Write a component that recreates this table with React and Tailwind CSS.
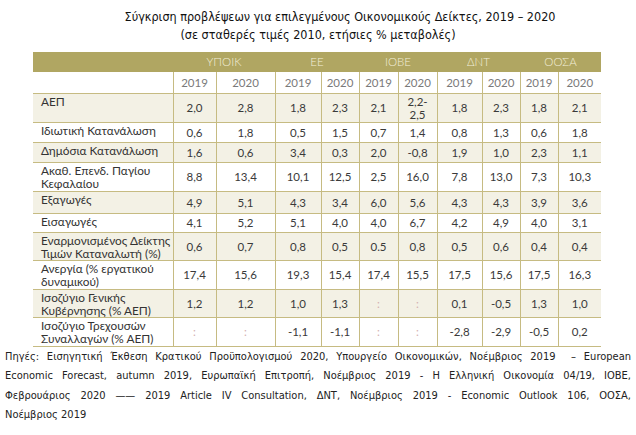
import React from "react";

const groups = ["ΥΠΟΙΚ", "ΕΕ", "ΙΟΒΕ", "ΔΝΤ", "ΟΟΣΑ"];

const colWidths = [140, 43, 59, 46, 38, 39, 39, 45, 38, 38, 43];

const rows = [
  { label: "ΑΕΠ", h: 29, values: ["2,0", "2,8", "1,8", "2,3", "2,1", "2,2-|2,5", "1,8", "2,3", "1,8", "2,1"] },
  { label: "Ιδιωτική Κατανάλωση", h: 20, values: ["0,6", "1,8", "0,5", "1,5", "0,7", "1,4", "0,8", "1,3", "0,6", "1,8"] },
  { label: "Δημόσια Κατανάλωση", h: 20, values: ["1,6", "0,6", "3,4", "0,3", "2,0", "-0,8", "1,9", "1,0", "2,3", "1,1"] },
  { label: "Ακαθ. Επενδ. Παγίου Κεφαλαίου", h: 29, values: ["8,8", "13,4", "10,1", "12,5", "2,5", "16,0", "7,8", "13,0", "7,3", "10,3"] },
  { label: "Εξαγωγές", h: 22, values: ["4,9", "5,1", "4,3", "3,4", "6,0", "5,6", "4,3", "4,3", "3,9", "3,6"] },
  { label: "Εισαγωγές", h: 19, values: ["4,1", "5,2", "5,1", "4,0", "4,0", "6,7", "4,2", "4,9", "4,0", "3,1"] },
  { label: "Εναρμονισμένος Δείκτης Τιμών Καταναλωτή (%)", h: 28, values: ["0,6", "0,7", "0,8", "0,5", "0.5", "0,8", "0,5", "0,6", "0,4", "0,4"] },
  { label: "Ανεργία (% εργατικού δυναμικού)", h: 29, values: ["17,4", "15,6", "19,3", "15,4", "17,4", "15,5", "17,5", "15,6", "17,5", "16,3"] },
  { label: "Ισοζύγιο Γενικής Κυβέρνησης (% ΑΕΠ)", h: 28, values: ["1,2", "1,2", "1,0", "1,3", ":", ":", "0,1", "-0,5", "1,3", "1,0"] },
  { label: "Ισοζύγιο Τρεχουσών Συναλλαγών (% ΑΕΠ)", h: 29, values: [":", ":", "-1,1", "-1,1", ":", ":", "-2,8", "-2,9", "-0,5", "0,2"] },
];

const footerLines = [
  "Πηγές: Εισηγητική Έκθεση Κρατικού Προϋπολογισμού 2020, Υπουργείο Οικονομικών, Νοέμβριος 2019 \u00a0– European",
  "Economic Forecast, autumn 2019, Ευρωπαϊκή Επιτροπή, Νοέμβριος 2019 - Η Ελληνική Οικονομία 04/19, ΙΟΒΕ,",
  "Φεβρουάριος 2020 —— 2019 Article IV Consultation, ΔΝΤ, Νοέμβριος 2019 - Economic Outlook 106, ΟΟΣΑ,",
];

function Cell({ value, last }) {
  const dim = value === ":";
  const parts = value.split("|");
  return (
    <td
      className={`border-b border-[#c6bb82] p-0 text-center align-middle leading-[13px] ${last ? "" : "border-r"} ${dim ? "text-[#d2afaf]" : "text-[#3a3a3a]"}`}
    >
      {parts.map((p, i) => (
        <React.Fragment key={i}>
          {i > 0 && <br />}
          {p}
        </React.Fragment>
      ))}
    </td>
  );
}

export default function App() {
  return (
    <div className="w-[636px] h-[435px] overflow-hidden bg-white">
      <div className="pt-[8px] text-[12.5px] leading-[18px] text-[#111] font-['DejaVu_Sans_Condensed','DejaVu_Sans',sans-serif]">
        <div className="text-center pl-[44px]">
          Σύγκριση προβλέψεων για επιλεγμένους Οικονομικούς Δείκτες, 2019 – 2020
        </div>
        <div className="text-center">(σε σταθερές τιμές 2010, ετήσιες % μεταβολές)</div>
      </div>

      <table className="ml-[33px] mt-[8px] table-fixed border-collapse w-[568px] text-[11.5px] font-['Lato',sans-serif]">
        <colgroup>
          {colWidths.map((w, i) => (
            <col key={i} style={{ width: w }} />
          ))}
        </colgroup>
        <tbody>
          <tr className="h-[20px] bg-[#b0a662] text-[#f3efd9]">
            <td />
            {groups.map((g) => (
              <td key={g} colSpan={2} className="text-center font-light">
                {g}
              </td>
            ))}
          </tr>
          <tr className="h-[21px] bg-white text-[#7a7a7a]">
            <td className="border-b border-r border-[#c6bb82]" />
            {groups.flatMap((g, gi) =>
              ["2019", "2020"].map((y, yi) => (
                <td
                  key={g + y}
                  className={`border-b border-[#c6bb82] text-center ${gi === 4 && yi === 1 ? "" : "border-r"}`}
                >
                  {y}
                </td>
              ))
            )}
          </tr>
          {rows.map((r, ri) => (
            <tr
              key={r.label}
              className={ri % 2 === 0 ? "bg-[#f3f1e5]" : "bg-white"}
              style={{ height: r.h }}
            >
              <td className="border-b border-r border-[#c6bb82] align-top pl-[8px] pr-[2px] pt-[1px] pb-0 text-[11.8px] leading-[13px] text-[#333]">
                {r.label}
              </td>
              {r.values.map((v, i) => (
                <Cell key={i} value={v} last={i === r.values.length - 1} />
              ))}
            </tr>
          ))}
        </tbody>
      </table>

      <div className="px-[5px] text-[11px] leading-[19.5px] text-[#222] font-['DejaVu_Sans_Condensed','DejaVu_Sans',sans-serif]">
        {footerLines.map((l) => (
          <div key={l} className="text-justify [text-align-last:justify] whitespace-nowrap">
            {l}
          </div>
        ))}
        <div>Νοέμβριος 2019</div>
      </div>
    </div>
  );
}
